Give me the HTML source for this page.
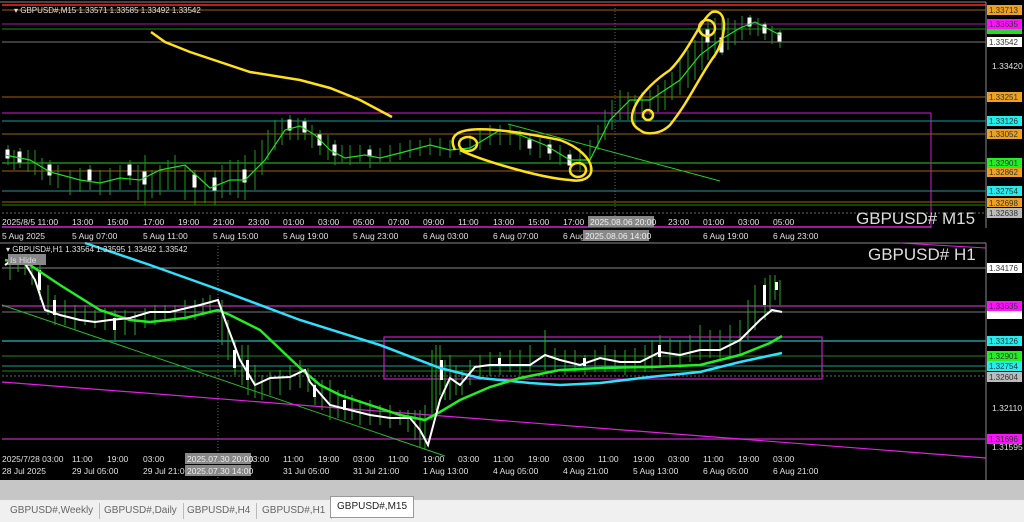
<!DOCTYPE html>
<html><head><meta charset="utf-8"><style>
body{margin:0;width:1024px;height:522px;overflow:hidden;background:#000;font-family:"Liberation Sans",sans-serif}
svg{position:absolute;left:0;top:0}
.tabs{position:absolute;left:0;top:480px;width:1024px;height:42px;background:#c6c6c6}
.tabbar{position:absolute;left:0;top:20px;width:1024px;height:22px;background:#f0f0f0}
.tab{position:absolute;top:3px;height:16px;font-size:10px;color:#666;line-height:16px;padding:0 6px;border-right:1px solid #bbb}
.act{background:#fff;border:1px solid #999;top:-4px;height:20px;line-height:20px;color:#222}
</style></head><body>
<svg width="1024" height="522" font-family="Liberation Sans" font-size="8.5">
<rect x="0" y="0" width="1024" height="480" fill="#000"/>
<line x1="0" y1="2" x2="986" y2="2" stroke="#888"/>
<line x1="2" y1="5" x2="986" y2="5" stroke="#f22" stroke-width="1.5"/>
<line x1="986" y1="2" x2="986" y2="228" stroke="#888"/>
<g stroke-width="1">
<line x1="2" y1="10" x2="986" y2="10" stroke="#a06010"/>
<line x1="2" y1="24" x2="986" y2="24" stroke="#a020a0"/>
<line x1="2" y1="29" x2="986" y2="29" stroke="#1a8a1a"/>
<line x1="2" y1="42" x2="986" y2="42" stroke="#777"/>
<line x1="2" y1="97" x2="986" y2="97" stroke="#a06010"/>
<line x1="2" y1="113" x2="931" y2="113" stroke="#d020d0"/>
<line x1="931" y1="113" x2="931" y2="228" stroke="#d020d0"/>
<line x1="2" y1="121" x2="986" y2="121" stroke="#1a9a9a"/>
<line x1="2" y1="134" x2="986" y2="134" stroke="#a06010"/>
<line x1="2" y1="163" x2="986" y2="163" stroke="#1a8a1a" stroke-width="1.5"/>
<line x1="2" y1="171" x2="986" y2="171" stroke="#a06010"/>
<line x1="2" y1="191" x2="986" y2="191" stroke="#1a9a9a"/>
<line x1="2" y1="202" x2="986" y2="202" stroke="#a06010"/>
<line x1="2" y1="205" x2="986" y2="205" stroke="#1a8a1a"/>
<line x1="2" y1="213" x2="986" y2="213" stroke="#666" stroke-dasharray="2,2"/>
<line x1="2" y1="227" x2="931" y2="227" stroke="#d020d0" stroke-width="1.5"/>
<line x1="615" y1="5" x2="615" y2="228" stroke="#666" stroke-dasharray="1,2"/>
</g>
<g stroke="#1a9a1a" stroke-width="1">
<path d="M8 145V165M14 150V170M20 148V168M28 150V172M35 150V175M42 158V180M50 160V185M58 165V188M70 170V195M80 168V192M90 165V190M100 170V195M110 168V195M120 165V190M130 160V185M138 165V200M145 155V205M152 170V198M160 165V195M168 160V190M175 155V190M185 165V200M195 170V205M205 172V203M215 170V205M222 165V198M230 160V195M238 160V198M245 155V200M255 150V190M262 140V175M268 130V160M275 120V150M282 118V145M290 115V140M298 118V140M305 118V140M312 125V148M320 130V155M328 135V160M335 140V165M342 145V163M350 145V165M360 145V162M370 145V168M380 148V162M390 145V162M400 143V160M410 140V158M420 140V156M430 138V155M440 138V156M450 140V158M460 138V155M470 135V152M480 130V150M490 125V145M500 125V145M510 125V145M520 130V150M530 135V155M540 138V158M550 140V160M560 145V165M570 150V175M580 148V172M590 140V170M598 125V150M605 110V140M612 100V130M620 90V120M628 92V120M635 95V125M642 92V118M650 90V115M658 85V112M665 80V110M672 72V100M680 60V95M688 50V88M695 40V80M702 30V70M708 20V60M715 18V58M722 15V55M728 18V50M735 20V45M742 16V40M750 15V35M758 18V36M765 22V40M772 26V44M780 30V48"/>
</g>
<g fill="#fff" stroke="#fff">
<rect x="6" y="150" width="3" height="8"/><rect x="18" y="152" width="3" height="10"/><rect x="48" y="165" width="3" height="10"/><rect x="88" y="170" width="3" height="10"/><rect x="128" y="165" width="3" height="10"/><rect x="143" y="172" width="3" height="12"/><rect x="193" y="175" width="3" height="12"/><rect x="213" y="178" width="3" height="12"/><rect x="243" y="170" width="3" height="12"/><rect x="288" y="120" width="3" height="10"/><rect x="303" y="122" width="3" height="10"/><rect x="318" y="135" width="3" height="10"/><rect x="333" y="145" width="3" height="10"/><rect x="368" y="150" width="3" height="6"/><rect x="528" y="140" width="3" height="8"/><rect x="548" y="145" width="3" height="8"/><rect x="568" y="155" width="3" height="10"/><rect x="706" y="30" width="3" height="12"/><rect x="720" y="38" width="3" height="14"/><rect x="748" y="18" width="3" height="8"/><rect x="763" y="25" width="3" height="8"/><rect x="778" y="33" width="3" height="8"/>
</g>
<polyline fill="none" stroke="#22dd22" stroke-width="1.2" points="5,155 30,160 50,172 80,180 100,183 120,178 140,180 160,170 185,165 210,188 230,180 245,180 265,160 285,130 300,126 315,135 330,150 345,158 365,155 380,158 400,153 430,145 450,150 470,148 500,130 520,135 545,145 570,160 590,160 610,120 630,100 650,100 680,80 700,55 720,40 740,28 755,22 780,35"/>
<line x1="508" y1="124" x2="720" y2="181" stroke="#22cc22"/>
<g fill="none" stroke="#ffe01a" stroke-width="2.5">
<polyline points="151,32 165,42 190,52 250,72 300,80 330,88 360,100 392,117"/>
<path d="M455,150 C440,120 500,128 560,140 C600,155 600,185 570,180 C540,178 480,160 460,150"/>
<ellipse cx="468" cy="144" rx="9" ry="7"/>
<ellipse cx="578" cy="170" rx="8" ry="7"/>
<path d="M640,130 C620,120 640,90 670,70 C690,50 700,20 712,12 C730,8 725,40 715,55 C700,75 690,100 670,125 C660,135 645,135 640,130"/>
<ellipse cx="707" cy="28" rx="8" ry="8"/>
<ellipse cx="648" cy="115" rx="5" ry="5"/>
</g>
<g fill="#e0e0e0">
<text x="14" y="13" font-size="8">▾ GBPUSD#,M15  1.33571 1.33585 1.33492 1.33542</text>
<text x="992" y="69">1.33420</text>
<text x="2" y="225">2025/8/5 11:00</text>
<text x="72" y="225">13:00</text><text x="107" y="225">15:00</text><text x="143" y="225">17:00</text><text x="178" y="225">19:00</text><text x="213" y="225">21:00</text><text x="248" y="225">23:00</text><text x="283" y="225">01:00</text><text x="318" y="225">03:00</text><text x="353" y="225">05:00</text><text x="388" y="225">07:00</text><text x="423" y="225">09:00</text><text x="458" y="225">11:00</text><text x="493" y="225">13:00</text><text x="528" y="225">15:00</text><text x="563" y="225">17:00</text><text x="668" y="225">23:00</text><text x="703" y="225">01:00</text><text x="738" y="225">03:00</text><text x="773" y="225">05:00</text>
<text x="2" y="239">5 Aug 2025</text><text x="72" y="239">5 Aug 07:00</text><text x="143" y="239">5 Aug 11:00</text><text x="213" y="239">5 Aug 15:00</text><text x="283" y="239">5 Aug 19:00</text><text x="353" y="239">5 Aug 23:00</text><text x="423" y="239">6 Aug 03:00</text><text x="493" y="239">6 Aug 07:00</text><text x="563" y="239">6 Aug</text><text x="703" y="239">6 Aug 19:00</text><text x="773" y="239">6 Aug 23:00</text>
</g>
<rect x="588" y="216" width="66" height="11" fill="#888"/><text x="590" y="225" fill="#eee">2025.08.06 20:00</text>
<rect x="583" y="230" width="66" height="11" fill="#888"/><text x="585" y="239" fill="#eee">2025.08.06 14:00</text>
<text x="856" y="224" fill="#ddd" font-size="17">GBPUSD# M15</text>
<g font-size="8">
<rect x="987" y="5" width="35" height="10" fill="#f0a020"/><text x="989" y="13" fill="#333">1.33713</text>
<rect x="987" y="19" width="35" height="10" fill="#ff10ff"/><text x="989" y="27" fill="#333">1.33635</text>
<rect x="987" y="29" width="35" height="5" fill="#22dd22"/>
<rect x="987" y="37" width="35" height="10" fill="#fff"/><text x="989" y="45" fill="#333">1.33542</text>
<rect x="987" y="92" width="35" height="10" fill="#f0a020"/><text x="989" y="100" fill="#333">1.33251</text>
<rect x="987" y="116" width="35" height="10" fill="#22eeee"/><text x="989" y="124" fill="#333">1.33126</text>
<rect x="987" y="129" width="35" height="10" fill="#f0a020"/><text x="989" y="137" fill="#333">1.33052</text>
<rect x="987" y="158" width="35" height="10" fill="#22ee22"/><text x="989" y="166" fill="#333">1.32901</text>
<rect x="987" y="168" width="35" height="9" fill="#f0a020"/><text x="989" y="175" fill="#333">1.32862</text>
<rect x="987" y="186" width="35" height="10" fill="#22eeee"/><text x="989" y="194" fill="#333">1.32754</text>
<rect x="987" y="198" width="35" height="9" fill="#f0a020"/><text x="989" y="206" fill="#333">1.32698</text>
<rect x="987" y="208" width="35" height="10" fill="#bbb"/><text x="989" y="216" fill="#333">1.32638</text>
</g>
<line x1="0" y1="243" x2="986" y2="243" stroke="#888"/>
<line x1="986" y1="243" x2="986" y2="480" stroke="#888"/>
<line x1="2" y1="268" x2="986" y2="268" stroke="#888"/>
<line x1="2" y1="306" x2="986" y2="306" stroke="#a020a0" stroke-width="1.5"/>
<line x1="2" y1="312" x2="986" y2="312" stroke="#777"/>
<line x1="2" y1="341" x2="986" y2="341" stroke="#1a9a9a" stroke-width="1.5"/>
<line x1="2" y1="356" x2="986" y2="356" stroke="#1a8a1a"/>
<line x1="2" y1="366" x2="986" y2="366" stroke="#1a9a9a"/>
<line x1="2" y1="371" x2="986" y2="371" stroke="#1a8a1a"/>
<line x1="2" y1="376" x2="986" y2="376" stroke="#666" stroke-dasharray="2,2"/>
<line x1="2" y1="439" x2="986" y2="439" stroke="#a020a0" stroke-width="1.5"/>
<line x1="218" y1="243" x2="218" y2="480" stroke="#666" stroke-dasharray="1,2"/>
<rect x="384" y="337" width="438" height="42" fill="none" stroke="#c020c0" stroke-width="1.2"/>
<line x1="2" y1="305" x2="445" y2="456" stroke="#22bb22"/>
<line x1="2" y1="382" x2="986" y2="458" stroke="#e020e0" stroke-width="1.2"/>
<line x1="900" y1="243" x2="986" y2="248" stroke="#e020e0"/>
<g stroke="#22aa22">
<path d="M10 258V280M18 255V272M25 255V275M32 258V285M40 265V300M48 285V315M55 295V325M65 300V325M75 305V330M85 305V325M95 310V328M105 308V330M115 310V340M125 310V335M135 312V335M145 308V328M155 305V325M165 305V322M175 305V322M185 300V320M195 300V320M203 298V315M210 295V312M222 300V345M228 320V360M235 340V375M242 345V385M248 345V395M255 365V398M262 375V400M270 372V395M280 370V395M290 365V390M300 360V388M308 368V392M315 378V405M322 380V410M330 380V420M338 390V418M345 390V420M352 395V420M360 400V425M370 400V425M380 405V425M390 405V428M400 410V425M408 410V432M415 410V440M420 410V448M425 405V450M432 350V420M436 345V410M440 345V395M445 360V400M450 355V400M456 365V395M462 370V395M470 360V385M480 355V380M490 352V376M500 352V375M510 350V372M520 350V375M530 345V372M545 330V370M555 348V372M565 350V375M575 350V372M585 355V375M595 350V372M605 345V372M615 350V372M625 350V375M635 348V372M645 345V372M652 340V370M660 335V368M670 338V366M680 340V368M690 335V362M700 325V360M710 330V358M720 330V360M730 325V358M740 320V355M748 300V340M755 285V330M765 278V320M770 275V310M775 275V300M780 280V305"/>
</g>
<g fill="#fff">
<rect x="38" y="270" width="3" height="20"/><rect x="53" y="300" width="3" height="15"/><rect x="113" y="318" width="3" height="12"/><rect x="233" y="350" width="3" height="18"/><rect x="246" y="360" width="3" height="20"/><rect x="313" y="385" width="3" height="12"/><rect x="343" y="400" width="3" height="10"/><rect x="440" y="360" width="3" height="20"/><rect x="498" y="358" width="3" height="8"/><rect x="583" y="358" width="3" height="8"/><rect x="658" y="345" width="3" height="12"/><rect x="763" y="285" width="3" height="20"/><rect x="775" y="282" width="3" height="8"/>
</g>
<polyline fill="none" stroke="#30e0ff" stroke-width="2.5" points="85,243 150,265 220,290 300,320 380,345 440,368 480,378 530,383 560,385 600,383 650,377 700,372 740,362 782,353"/>
<polyline fill="none" stroke="#22ee22" stroke-width="2.5" points="5,260 30,265 60,285 100,310 130,320 150,322 185,318 218,310 230,315 260,330 300,368 320,385 340,395 370,405 400,415 425,420 440,412 460,400 490,387 520,378 560,370 600,368 650,367 700,365 740,355 770,343 782,336"/>
<polyline fill="none" stroke="#fff" stroke-width="2" points="5,265 20,255 35,280 45,310 60,315 80,320 95,322 110,320 130,318 150,312 170,312 200,305 218,300 225,320 240,360 255,385 270,378 290,377 305,370 310,382 330,405 350,410 370,415 390,418 410,418 420,430 428,445 440,400 450,378 460,385 475,367 490,365 510,365 530,365 545,355 560,360 580,365 600,358 620,362 640,362 660,352 680,355 700,350 720,350 740,340 760,320 772,310 782,312"/>
<g fill="#e0e0e0">
<text x="6" y="252" font-size="8">▾ GBPUSD#,H1  1.33564 1.33595 1.33492 1.33542</text>
<rect x="8" y="254" width="38" height="11" fill="#888"/><text x="10" y="263" fill="#ddd">Is Hide</text>
<text x="992" y="411">1.32110</text><text x="992" y="450">1.31595</text>
<text x="2" y="462">2025/7/28 03:00</text><text x="72" y="462">11:00</text><text x="107" y="462">19:00</text><text x="143" y="462">03:00</text><text x="248" y="462">03:00</text><text x="283" y="462">11:00</text><text x="318" y="462">19:00</text><text x="353" y="462">03:00</text><text x="388" y="462">11:00</text><text x="423" y="462">19:00</text><text x="458" y="462">03:00</text><text x="493" y="462">11:00</text><text x="528" y="462">19:00</text><text x="563" y="462">03:00</text><text x="598" y="462">11:00</text><text x="633" y="462">19:00</text><text x="668" y="462">03:00</text><text x="703" y="462">11:00</text><text x="738" y="462">19:00</text><text x="773" y="462">03:00</text>
<text x="2" y="474">28 Jul 2025</text><text x="72" y="474">29 Jul 05:00</text><text x="143" y="474">29 Jul 21:00</text><text x="283" y="474">31 Jul 05:00</text><text x="353" y="474">31 Jul 21:00</text><text x="423" y="474">1 Aug 13:00</text><text x="493" y="474">4 Aug 05:00</text><text x="563" y="474">4 Aug 21:00</text><text x="633" y="474">5 Aug 13:00</text><text x="703" y="474">6 Aug 05:00</text><text x="773" y="474">6 Aug 21:00</text>
</g>
<rect x="185" y="453" width="66" height="11" fill="#888"/><text x="187" y="462" fill="#eee">2025.07.30 20:00</text>
<rect x="185" y="465" width="66" height="11" fill="#888"/><text x="187" y="474" fill="#eee">2025.07.30 14:00</text>
<text x="868" y="260" fill="#ddd" font-size="17">GBPUSD# H1</text>
<g font-size="8">
<rect x="987" y="263" width="35" height="10" fill="#fff"/><text x="989" y="271" fill="#333">1.34176</text>
<rect x="987" y="301" width="35" height="10" fill="#ff10ff"/><text x="989" y="309" fill="#333">1.33635</text>
<rect x="987" y="311" width="35" height="8" fill="#fff"/>
<rect x="987" y="336" width="35" height="10" fill="#22eeee"/><text x="989" y="344" fill="#333">1.33126</text>
<rect x="987" y="351" width="35" height="10" fill="#22ee22"/><text x="989" y="359" fill="#333">1.32901</text>
<rect x="987" y="361" width="35" height="10" fill="#22eeee"/><text x="989" y="369" fill="#333">1.32754</text>
<rect x="987" y="372" width="35" height="10" fill="#bbb"/><text x="989" y="380" fill="#333">1.32604</text>
<rect x="987" y="434" width="35" height="10" fill="#ff10ff"/><text x="989" y="442" fill="#333">1.31696</text>
</g>
</svg>
<div class="tabs"><div class="tabbar">
<div class="tab" style="left:4px">GBPUSD#,Weekly</div>
<div class="tab" style="left:98px">GBPUSD#,Daily</div>
<div class="tab" style="left:181px">GBPUSD#,H4</div>
<div class="tab" style="left:256px">GBPUSD#,H1</div>
<div class="tab act" style="left:330px">GBPUSD#,M15</div>
</div></div>
</body></html>
